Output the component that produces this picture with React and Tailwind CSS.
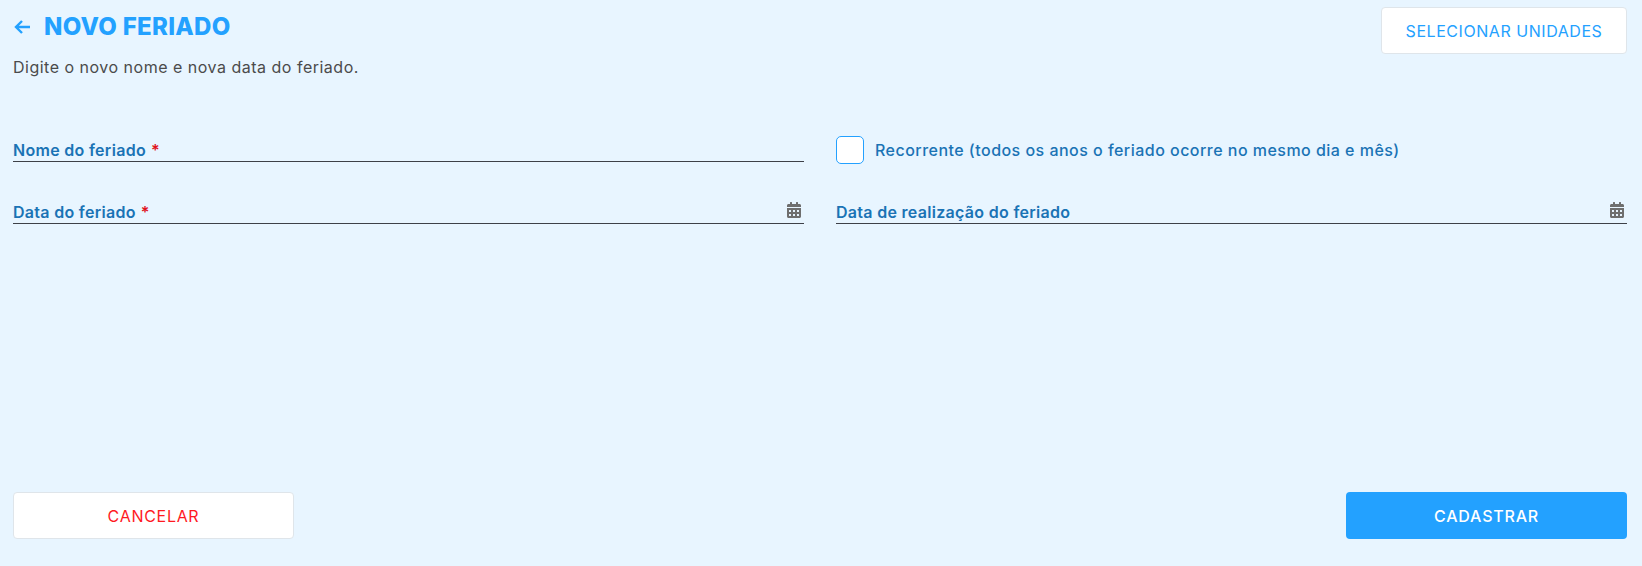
import React from "react";
import { FaCalendarAlt } from "react-icons/fa";

const font = "font-['Inter','Noto_Sans',sans-serif]";

function Field({ label, required, icon }) {
  return (
    <div className="flex h-[32px] items-end justify-between border-b border-[#3d4048]">
      <span className="text-[16px] leading-[22px] font-semibold tracking-[0.3px] text-[#1a73b5]">
        {label}
        {required && <span className="ml-[5px] text-[#e0131c]">*</span>}
      </span>
      {icon && <FaCalendarAlt className="mb-[5px] mr-[3px] h-[16px] w-[14px] text-[#6e6e6e]" />}
    </div>
  );
}

export default function App() {
  return (
    <div className={`${font} flex h-[566px] flex-col justify-between bg-[#e8f5ff] pl-[13px] pr-[15px] pb-[27px] pt-[7px]`}>
      <div>
        <div className="flex items-start justify-between">
          <div>
            <div className="flex items-center gap-[14px] pl-[1px] pt-[7px] text-[#23a1ff]">
              <svg width="16" height="14" viewBox="0 0 16 14" fill="none" stroke="currentColor" strokeWidth="2.4">
                <path d="M16 7H2M8 1 2 7l6 6" />
              </svg>
              <h1 className="text-[24px] leading-[26px] font-extrabold tracking-[0.3px]">NOVO FERIADO</h1>
            </div>
            <p className="mt-[17px] text-[16px] leading-[20px] tracking-[0.5px] text-[#4b4b4b]">Digite o novo nome e nova data do feriado.</p>
          </div>
          <button className="h-[47px] w-[246px] rounded-[4px] border border-[#dfe5ea] bg-white text-[16px] tracking-[0.55px] text-[#23a1ff]">
            SELECIONAR UNIDADES
          </button>
        </div>
        <div className="mt-[53px] grid grid-cols-2 gap-x-[32px] gap-y-[30px]">
          <Field label="Nome do feriado" required />
          <div className="flex h-[32px] items-center gap-[11px]">
            <span className="mt-[8px] h-[28px] w-[28px] rounded-[5px] border border-[#23a1ff] bg-white" />
            <span className="mt-[8px] text-[16px] font-medium tracking-[0.47px] text-[#1a73b5]">
              Recorrente (todos os anos o feriado ocorre no mesmo dia e mês)
            </span>
          </div>
          <Field label="Data do feriado" required icon />
          <Field label="Data de realização do feriado" icon />
        </div>
      </div>
      <div className="flex items-center justify-between">
        <button className="h-[47px] w-[281px] rounded-[4px] border border-[#dfe5ea] bg-white text-[16px] tracking-[0.7px] text-[#ff1a1f]">
          CANCELAR
        </button>
        <button className="h-[47px] w-[281px] rounded-[4px] bg-[#23a1ff] text-[16px] font-medium tracking-[0.8px] text-white">
          CADASTRAR
        </button>
      </div>
    </div>
  );
}
